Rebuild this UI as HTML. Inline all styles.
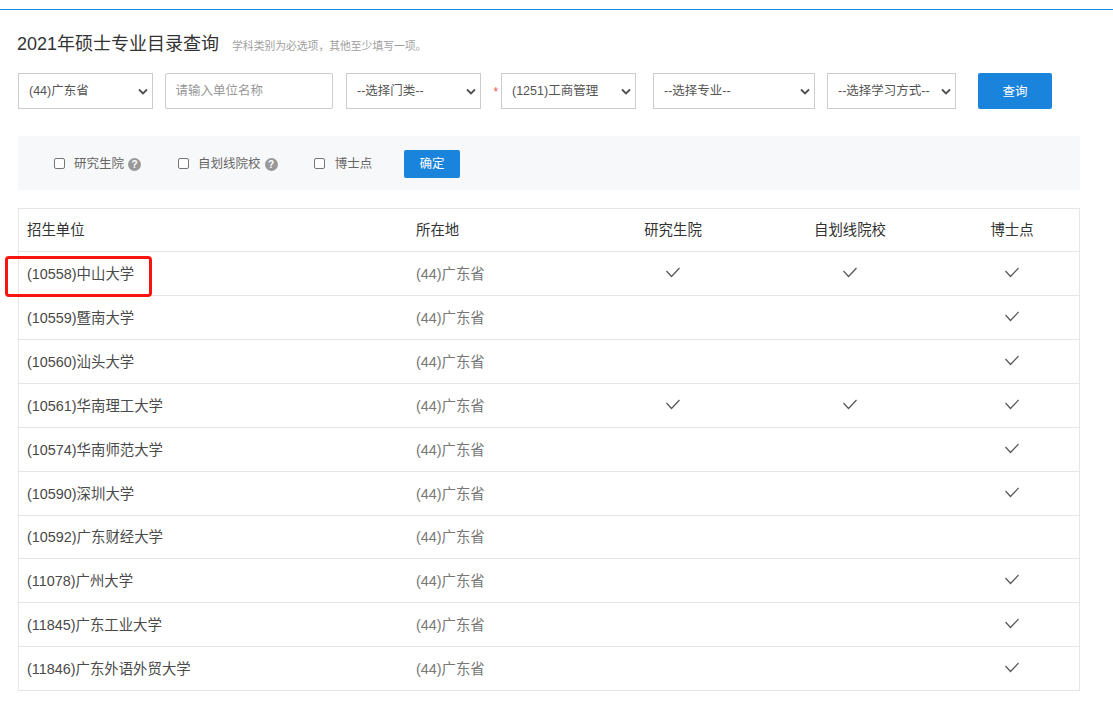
<!DOCTYPE html>
<html lang="zh-CN">
<head>
<meta charset="utf-8">
<title>2021年硕士专业目录查询</title>
<style>
*{box-sizing:border-box;}
html,body{margin:0;padding:0;background:#fff;}
body{width:1113px;height:702px;overflow:hidden;position:relative;font-family:"Liberation Sans","Noto Sans CJK SC",sans-serif;color:#333;}
.topline{position:absolute;left:0;top:9px;width:1113px;height:1px;background:#1a88dd;}
.title{position:absolute;left:17px;top:31px;height:26px;line-height:26px;font-size:18px;color:#333;white-space:nowrap;}
.title small{font-size:10.8px;color:#a0a0a0;margin-left:13px;}
.ctl{position:absolute;top:73px;height:36px;border:1px solid #ccc;background:#fff;font-size:12.5px;color:#555;line-height:35.5px;padding-left:10px;white-space:nowrap;overflow:hidden;}
.ctl svg{position:absolute;right:4px;top:13.6px;}
.ctl.ph{color:#999;border-radius:2px;padding-left:9.6px;}
.star{position:absolute;left:493.5px;top:85px;font-size:12px;color:#ee5555;line-height:14px;}
.btn{position:absolute;background:#1a84dd;color:#fff;text-align:center;font-size:12.5px;}
.bar{position:absolute;left:18px;top:136px;width:1062px;height:54px;background:#f7f8fa;}
.cb{position:absolute;top:158px;width:11px;height:11px;border:1px solid #767676;border-radius:2px;background:#fff;}
.lb{position:absolute;top:156px;height:16px;line-height:16px;font-size:12.5px;color:#666;}
.q{position:absolute;top:158px;width:13px;height:13px;border-radius:50%;background:#999;color:#fff;font-size:10px;font-weight:bold;line-height:13px;text-align:center;}
.tbl{position:absolute;left:18px;top:208px;width:1062px;height:483px;border:1px solid #e6e6e6;font-size:14.4px;}
.r{position:absolute;left:0;width:1060px;border-bottom:1px solid #e6e6e6;}
.r span{position:absolute;top:0;height:100%;display:flex;align-items:center;white-space:nowrap;padding-bottom:3px;}
.c1{left:8px;color:#4a4a4a;}
.c2{left:397px;color:#777;}
.c3{left:554px;width:200px;justify-content:center;}
.c4{left:731px;width:200px;justify-content:center;}
.c5{left:893px;width:200px;justify-content:center;}
.h span{color:#333;}
.ck{display:block;}
.red{position:absolute;left:5px;top:256px;width:147px;height:41px;border:3px solid #f8150f;border-radius:4px;}
</style>
</head>
<body>
<div class="topline"></div>
<div class="title">2021年硕士专业目录查询<small>学科类别为必选项，其他至少填写一项。</small></div>

<div class="ctl" style="left:18px;width:135px;">(44)广东省<svg width="10" height="8" viewBox="0 0 10 8"><path d="M1 1.5 L5 5.5 L9 1.5" fill="none" stroke="#505050" stroke-width="1.8"/></svg></div>
<div class="ctl ph" style="left:165px;width:168px;">请输入单位名称</div>
<div class="ctl" style="left:346px;width:135px;">--选择门类--<svg width="10" height="8" viewBox="0 0 10 8"><path d="M1 1.5 L5 5.5 L9 1.5" fill="none" stroke="#505050" stroke-width="1.8"/></svg></div>
<div class="star">*</div>
<div class="ctl" style="left:501px;width:135px;">(1251)工商管理<svg width="10" height="8" viewBox="0 0 10 8"><path d="M1 1.5 L5 5.5 L9 1.5" fill="none" stroke="#505050" stroke-width="1.8"/></svg></div>
<div class="ctl" style="left:653px;width:162px;">--选择专业--<svg width="10" height="8" viewBox="0 0 10 8"><path d="M1 1.5 L5 5.5 L9 1.5" fill="none" stroke="#505050" stroke-width="1.8"/></svg></div>
<div class="ctl" style="left:827px;width:129px;">--选择学习方式--<svg width="10" height="8" viewBox="0 0 10 8"><path d="M1 1.5 L5 5.5 L9 1.5" fill="none" stroke="#505050" stroke-width="1.8"/></svg></div>
<div class="btn" style="left:978px;top:73px;width:74px;height:36px;line-height:38px;border-radius:2px;">查询</div>

<div class="bar"></div>
<div class="cb" style="left:54px;"></div><div class="lb" style="left:74px;">研究生院</div><div class="q" style="left:128px;">?</div>
<div class="cb" style="left:178px;"></div><div class="lb" style="left:198px;">自划线院校</div><div class="q" style="left:264.5px;">?</div>
<div class="cb" style="left:314px;"></div><div class="lb" style="left:334.8px;">博士点</div>
<div class="btn" style="left:404px;top:150px;width:56px;height:28px;line-height:28px;border-radius:2px;">确定</div>

<div class="tbl">
<div class="r h" style="top:0px;height:43px;"><span class="c1">招生单位</span><span class="c2">所在地</span><span class="c3">研究生院</span><span class="c4">自划线院校</span><span class="c5">博士点</span></div>
<div class="r" style="top:43px;height:44px;"><span class="c1">(10558)中山大学</span><span class="c2">(44)广东省</span><span class="c3"><svg class="ck" width="16" height="12" viewBox="0 0 16 12"><path d="M1.5 5 L6.5 10.5 L14.5 2" fill="none" stroke="#555" stroke-width="1.2"/></svg></span><span class="c4"><svg class="ck" width="16" height="12" viewBox="0 0 16 12"><path d="M1.5 5 L6.5 10.5 L14.5 2" fill="none" stroke="#555" stroke-width="1.2"/></svg></span><span class="c5"><svg class="ck" width="16" height="12" viewBox="0 0 16 12"><path d="M1.5 5 L6.5 10.5 L14.5 2" fill="none" stroke="#555" stroke-width="1.2"/></svg></span></div>
<div class="r" style="top:87px;height:44px;"><span class="c1">(10559)暨南大学</span><span class="c2">(44)广东省</span><span class="c5"><svg class="ck" width="16" height="12" viewBox="0 0 16 12"><path d="M1.5 5 L6.5 10.5 L14.5 2" fill="none" stroke="#555" stroke-width="1.2"/></svg></span></div>
<div class="r" style="top:131px;height:44px;"><span class="c1">(10560)汕头大学</span><span class="c2">(44)广东省</span><span class="c5"><svg class="ck" width="16" height="12" viewBox="0 0 16 12"><path d="M1.5 5 L6.5 10.5 L14.5 2" fill="none" stroke="#555" stroke-width="1.2"/></svg></span></div>
<div class="r" style="top:175px;height:44px;"><span class="c1">(10561)华南理工大学</span><span class="c2">(44)广东省</span><span class="c3"><svg class="ck" width="16" height="12" viewBox="0 0 16 12"><path d="M1.5 5 L6.5 10.5 L14.5 2" fill="none" stroke="#555" stroke-width="1.2"/></svg></span><span class="c4"><svg class="ck" width="16" height="12" viewBox="0 0 16 12"><path d="M1.5 5 L6.5 10.5 L14.5 2" fill="none" stroke="#555" stroke-width="1.2"/></svg></span><span class="c5"><svg class="ck" width="16" height="12" viewBox="0 0 16 12"><path d="M1.5 5 L6.5 10.5 L14.5 2" fill="none" stroke="#555" stroke-width="1.2"/></svg></span></div>
<div class="r" style="top:219px;height:44px;"><span class="c1">(10574)华南师范大学</span><span class="c2">(44)广东省</span><span class="c5"><svg class="ck" width="16" height="12" viewBox="0 0 16 12"><path d="M1.5 5 L6.5 10.5 L14.5 2" fill="none" stroke="#555" stroke-width="1.2"/></svg></span></div>
<div class="r" style="top:263px;height:44px;"><span class="c1">(10590)深圳大学</span><span class="c2">(44)广东省</span><span class="c5"><svg class="ck" width="16" height="12" viewBox="0 0 16 12"><path d="M1.5 5 L6.5 10.5 L14.5 2" fill="none" stroke="#555" stroke-width="1.2"/></svg></span></div>
<div class="r" style="top:307px;height:43px;"><span class="c1">(10592)广东财经大学</span><span class="c2">(44)广东省</span></div>
<div class="r" style="top:350px;height:44px;"><span class="c1">(11078)广州大学</span><span class="c2">(44)广东省</span><span class="c5"><svg class="ck" width="16" height="12" viewBox="0 0 16 12"><path d="M1.5 5 L6.5 10.5 L14.5 2" fill="none" stroke="#555" stroke-width="1.2"/></svg></span></div>
<div class="r" style="top:394px;height:44px;"><span class="c1">(11845)广东工业大学</span><span class="c2">(44)广东省</span><span class="c5"><svg class="ck" width="16" height="12" viewBox="0 0 16 12"><path d="M1.5 5 L6.5 10.5 L14.5 2" fill="none" stroke="#555" stroke-width="1.2"/></svg></span></div>
<div class="r" style="top:438px;height:44px;"><span class="c1">(11846)广东外语外贸大学</span><span class="c2">(44)广东省</span><span class="c5"><svg class="ck" width="16" height="12" viewBox="0 0 16 12"><path d="M1.5 5 L6.5 10.5 L14.5 2" fill="none" stroke="#555" stroke-width="1.2"/></svg></span></div>
</div>
<div class="red"></div>
</body>
</html>
